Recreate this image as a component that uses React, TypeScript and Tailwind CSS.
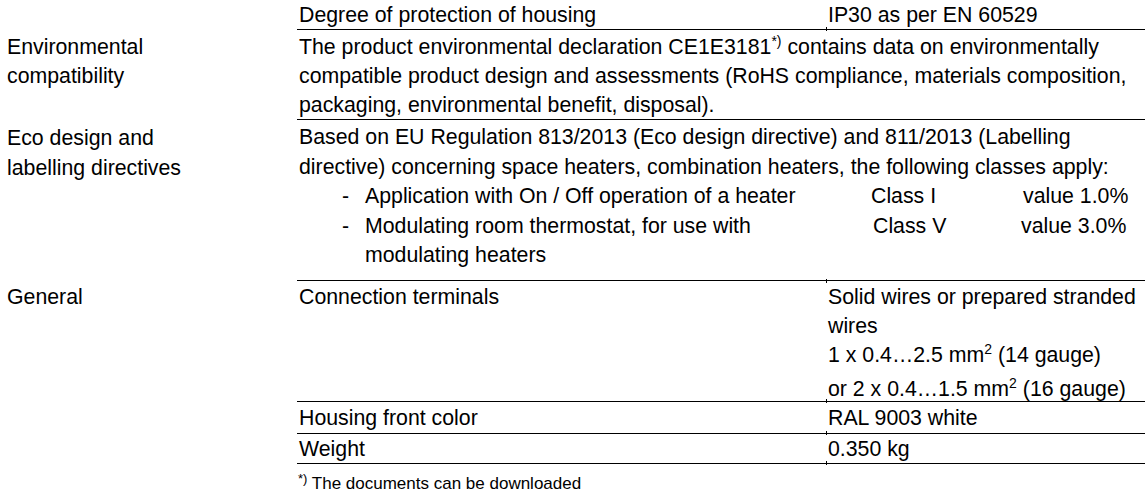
import React from "react";

function Tick({ top }: { top?: boolean }) {
    return (
        <span
            className={
                top
                    ? "absolute left-[529px] -top-[2px] h-[4px] w-px bg-black"
                    : "absolute left-[529px] -bottom-[2px] h-[4px] w-px bg-black"
            }
        />
    );
}

function Sup({ children }: { children: React.ReactNode }) {
    return <sup className="text-[14px] -top-[0.55em]">{children}</sup>;
}

export default function App() {
    return (
        <div className="w-[1147px] h-[501px] bg-white text-black font-['Liberation_Sans',Arial,sans-serif] text-[21.3px] leading-[29.5px] whitespace-nowrap">
            {/* Degree of protection */}
            <div className="flex h-[30px]">
                <div className="w-[297px]" />
                <div className="relative flex w-[848px] border-b border-black pt-px">
                    <div className="w-[529px] pl-[2px] leading-[29px]">Degree of protection of housing</div>
                    <div className="flex-1 pl-[2px] leading-[29px]">IP30 as per EN 60529</div>
                    <Tick />
                </div>
            </div>

            {/* Environmental compatibility */}
            <div className="flex h-[90px]">
                <div className="w-[297px] pl-[7px] pt-[3px] leading-[29px]">
                    <div>Environmental</div>
                    <div>compatibility</div>
                </div>
                <div className="w-[848px] border-b border-black pl-[2px] pt-[3px] leading-[29px]">
                    <div>
                        The product environmental declaration CE1E3181<Sup>*)</Sup> contains data on environmentally
                    </div>
                    <div>compatible product design and assessments (RoHS compliance, materials composition,</div>
                    <div>packaging, environmental benefit, disposal).</div>
                </div>
            </div>

            {/* Eco design */}
            <div className="flex h-[161px]">
                <div className="w-[297px] pl-[7px] pt-[3px]">
                    <div className="leading-[30.5px]">Eco design and</div>
                    <div>labelling directives</div>
                </div>
                <div className="w-[848px] border-b border-black pl-[2px] pt-[3px]">
                    <div>Based on EU Regulation 813/2013 (Eco design directive) and 811/2013 (Labelling</div>
                    <div>directive) concerning space heaters, combination heaters, the following classes apply:</div>
                    <div className="flex">
                        <div className="w-[66px] pl-[43px]">-</div>
                        <div className="w-[506px]">Application with On / Off operation of a heater</div>
                        <div className="w-[152px]">Class I</div>
                        <div>value 1.0%</div>
                    </div>
                    <div className="flex">
                        <div className="w-[66px] pl-[43px]">-</div>
                        <div className="w-[508px]">
                            <div>Modulating room thermostat, for use with</div>
                            <div>modulating heaters</div>
                        </div>
                        <div className="w-[148px]">Class V</div>
                        <div>value 3.0%</div>
                    </div>
                </div>
            </div>

            {/* General */}
            <div className="flex h-[121px]">
                <div className="w-[297px] pl-[7px] pt-[2px] leading-[29px]">General</div>
                <div className="relative flex w-[848px] border-b border-black pt-[2px] leading-[29px]">
                    <div className="w-[529px] pl-[2px]">Connection terminals</div>
                    <div className="flex-1 pl-[2px]">
                        <div>Solid wires or prepared stranded</div>
                        <div>wires</div>
                        <div>
                            1 x 0.4…2.5 mm<Sup>2</Sup> (14 gauge)
                        </div>
                        <div className="pt-[5px]">
                            or 2 x 0.4…1.5 mm<Sup>2</Sup> (16 gauge)
                        </div>
                    </div>
                    <Tick top />
                    <Tick />
                </div>
            </div>

            {/* Housing front color */}
            <div className="flex h-[32px]">
                <div className="w-[297px]" />
                <div className="relative flex w-[848px] border-b border-black pt-[2px] leading-[29px]">
                    <div className="w-[529px] pl-[2px]">Housing front color</div>
                    <div className="flex-1 pl-[2px]">RAL 9003 white</div>
                    <Tick />
                </div>
            </div>

            {/* Weight */}
            <div className="flex h-[30px]">
                <div className="w-[297px]" />
                <div className="relative flex w-[848px] border-b border-black pt-px leading-[29px]">
                    <div className="w-[529px] pl-[2px]">Weight</div>
                    <div className="flex-1 pl-[2px]">0.350 kg</div>
                    <Tick />
                </div>
            </div>

            {/* Footnote */}
            <div className="pl-[298px] pt-[10px] text-[17px] leading-[20px]">
                <sup className="text-[13px]">*)</sup> The documents can be downloaded
            </div>
        </div>
    );
}
